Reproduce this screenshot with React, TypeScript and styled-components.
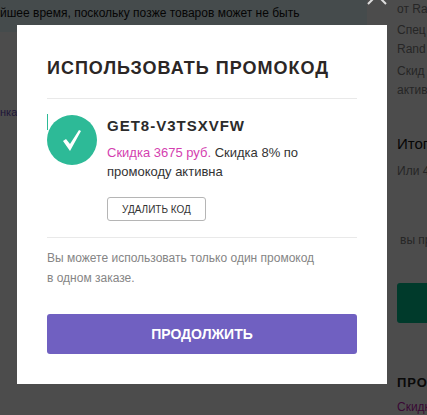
import React from "react";
import styled, { createGlobalStyle } from "styled-components";

const GlobalStyle = createGlobalStyle`
  *, *::before, *::after { box-sizing: border-box; }
  html, body { margin: 0; overflow: hidden; }
  body {
    background: #fff;
    color: #222;
    font-family: "Liberation Sans", Arial, sans-serif;
    font-size: 12px;
  }
  h2, h3, p { margin: 0; }
`;

const Page = styled.div`
  display: grid;
  grid-template-columns: 1fr 40px;
  height: 100vh;
  overflow: hidden;
  white-space: nowrap;
`;

const Main = styled.main`
  min-width: 0;
  overflow: hidden;
`;

const Notice = styled.p`
  height: 32px;
  padding-top: 4px;
  margin-right: 20px;
  background: #e8fafd;
  color: #111;
  line-height: 18px;
`;

const PageLink = styled.a`
  display: block;
  margin-top: 72px;
  color: #6a50c0;
  font-size: 11px;
  line-height: 16px;
  text-decoration: none;
`;

const Sidebar = styled.aside`
  padding-left: 10px;
  overflow: hidden;
`;

const SideText = styled.p<{ $top?: number; $indent?: number; $tone?: string }>`
  margin-top: ${(p) => p.$top ?? 0}px;
  padding-left: ${(p) => p.$indent ?? 0}px;
  color: ${(p) => p.$tone ?? "#808080"};
  line-height: 19px;
`;

const Total = styled.p`
  margin-top: 34px;
  color: #111;
  font-size: 15px;
  line-height: 20px;
`;

const Checkout = styled.button`
  display: block;
  width: 100%;
  height: 40px;
  margin-top: 33px;
  border: 0;
  border-radius: 3px 0 0 3px;
  background: #00c291;
`;

const SideTitle = styled.h3`
  margin-top: 50px;
  font-size: 13px;
  line-height: 20px;
  letter-spacing: 1px;
`;

const Overlay = styled.div`
  position: fixed;
  inset: 0;
  display: grid;
  align-items: start;
  padding: 25px 40px 31px 17px;
  background: rgba(0, 0, 0, 0.7);
`;

const Dialog = styled.section`
  position: relative;
  padding: 30px;
  background: #fff;
`;

const Close = styled.button`
  position: absolute;
  top: -37px;
  right: 0;
  display: block;
  padding: 0;
  border: 0;
  background: none;
  line-height: 0;
`;

const Title = styled.h2`
  padding: 1px 0 17px;
  border-bottom: 1px solid #e9e9e9;
  color: #2b2625;
  font-size: 18px;
  line-height: 25px;
  letter-spacing: 1px;
  white-space: nowrap;
`;

const Promo = styled.div`
  display: flex;
  gap: 10px;
  padding: 15px 0 16px;
  border-bottom: 1px solid #e9e9e9;
`;

const Mark = styled.svg`
  flex: none;
  display: block;
`;

const PromoBody = styled.div`
  flex: 1;
  min-width: 0;
`;

const Code = styled.h3`
  color: #2b2b2b;
  font-size: 15px;
  line-height: 24px;
  letter-spacing: 1px;
`;

const Discount = styled.p`
  margin-top: 5px;
  max-width: 200px;
  color: #333;
  font-size: 13px;
  line-height: 19px;
`;

const Amount = styled.span`
  color: #d43fb0;
`;

const Remove = styled.button`
  display: block;
  height: 24px;
  margin-top: 16px;
  padding: 0 14px;
  border: 1px solid #b5b5b5;
  border-radius: 3px;
  background: #fff;
  color: #333;
  font: 10px "Liberation Sans", Arial, sans-serif;
`;

const Hint = styled.p`
  max-width: 270px;
  margin-top: 10px;
  color: #858585;
  font-size: 12px;
  line-height: 20px;
`;

const Continue = styled.button`
  display: block;
  width: 100%;
  height: 40px;
  margin-top: 26px;
  padding: 0;
  border: 0;
  border-radius: 3px;
  background: #7060c1;
  color: #fff;
  font: bold 14px "Liberation Sans", Arial, sans-serif;
`;

export default function App() {
  return (
    <>
      <GlobalStyle />
      <Page>
        <Main>
          <Notice>йшее время, поскольку позже товаров может не быть</Notice>
          <PageLink href="#">нка</PageLink>
        </Main>
        <Sidebar>
          <SideText>от Ra</SideText>
          <SideText $top={2}>Спец</SideText>
          <SideText>Rand</SideText>
          <SideText $top={3}>Скид</SideText>
          <SideText>актив</SideText>
          <Total>Итог</Total>
          <SideText $top={8}>Или 4</SideText>
          <SideText $top={50} $indent={3}>вы пр</SideText>
          <Checkout aria-label="Оформить" />
          <SideTitle>ПРО</SideTitle>
          <SideText $top={5} $tone="#c020b0">Скидк</SideText>
        </Sidebar>
      </Page>
      <Overlay>
        <Dialog role="dialog" aria-modal="true" aria-labelledby="promo-title">
          <Close aria-label="Закрыть">
            <svg width="20" height="18" viewBox="0 0 20 18" fill="none" stroke="#ddd" strokeWidth="2">
              <path d="M1 -2 L19 16 M19 -2 L1 16" />
            </svg>
          </Close>
          <Title id="promo-title">ИСПОЛЬЗОВАТЬ ПРОМОКОД</Title>
          <Promo>
            <Mark width="50" height="52" viewBox="0 0 50 52" aria-hidden="true">
              <path d="M0.5 0v16" stroke="#2dba97" />
              <circle cx="25" cy="26" r="25" fill="#2dba97" />
              <path d="M16 27l3-2 4 5 9-14 2 1-11 20z" fill="#fff" />
            </Mark>
            <PromoBody>
              <Code>GET8-V3TSXVFW</Code>
              <Discount>
                <Amount>Скидка 3675 руб.</Amount> Скидка 8% по промокоду активна
              </Discount>
              <Remove>УДАЛИТЬ КОД</Remove>
            </PromoBody>
          </Promo>
          <Hint>Вы можете использовать только один промокод в одном заказе.</Hint>
          <Continue>ПРОДОЛЖИТЬ</Continue>
        </Dialog>
      </Overlay>
    </>
  );
}
